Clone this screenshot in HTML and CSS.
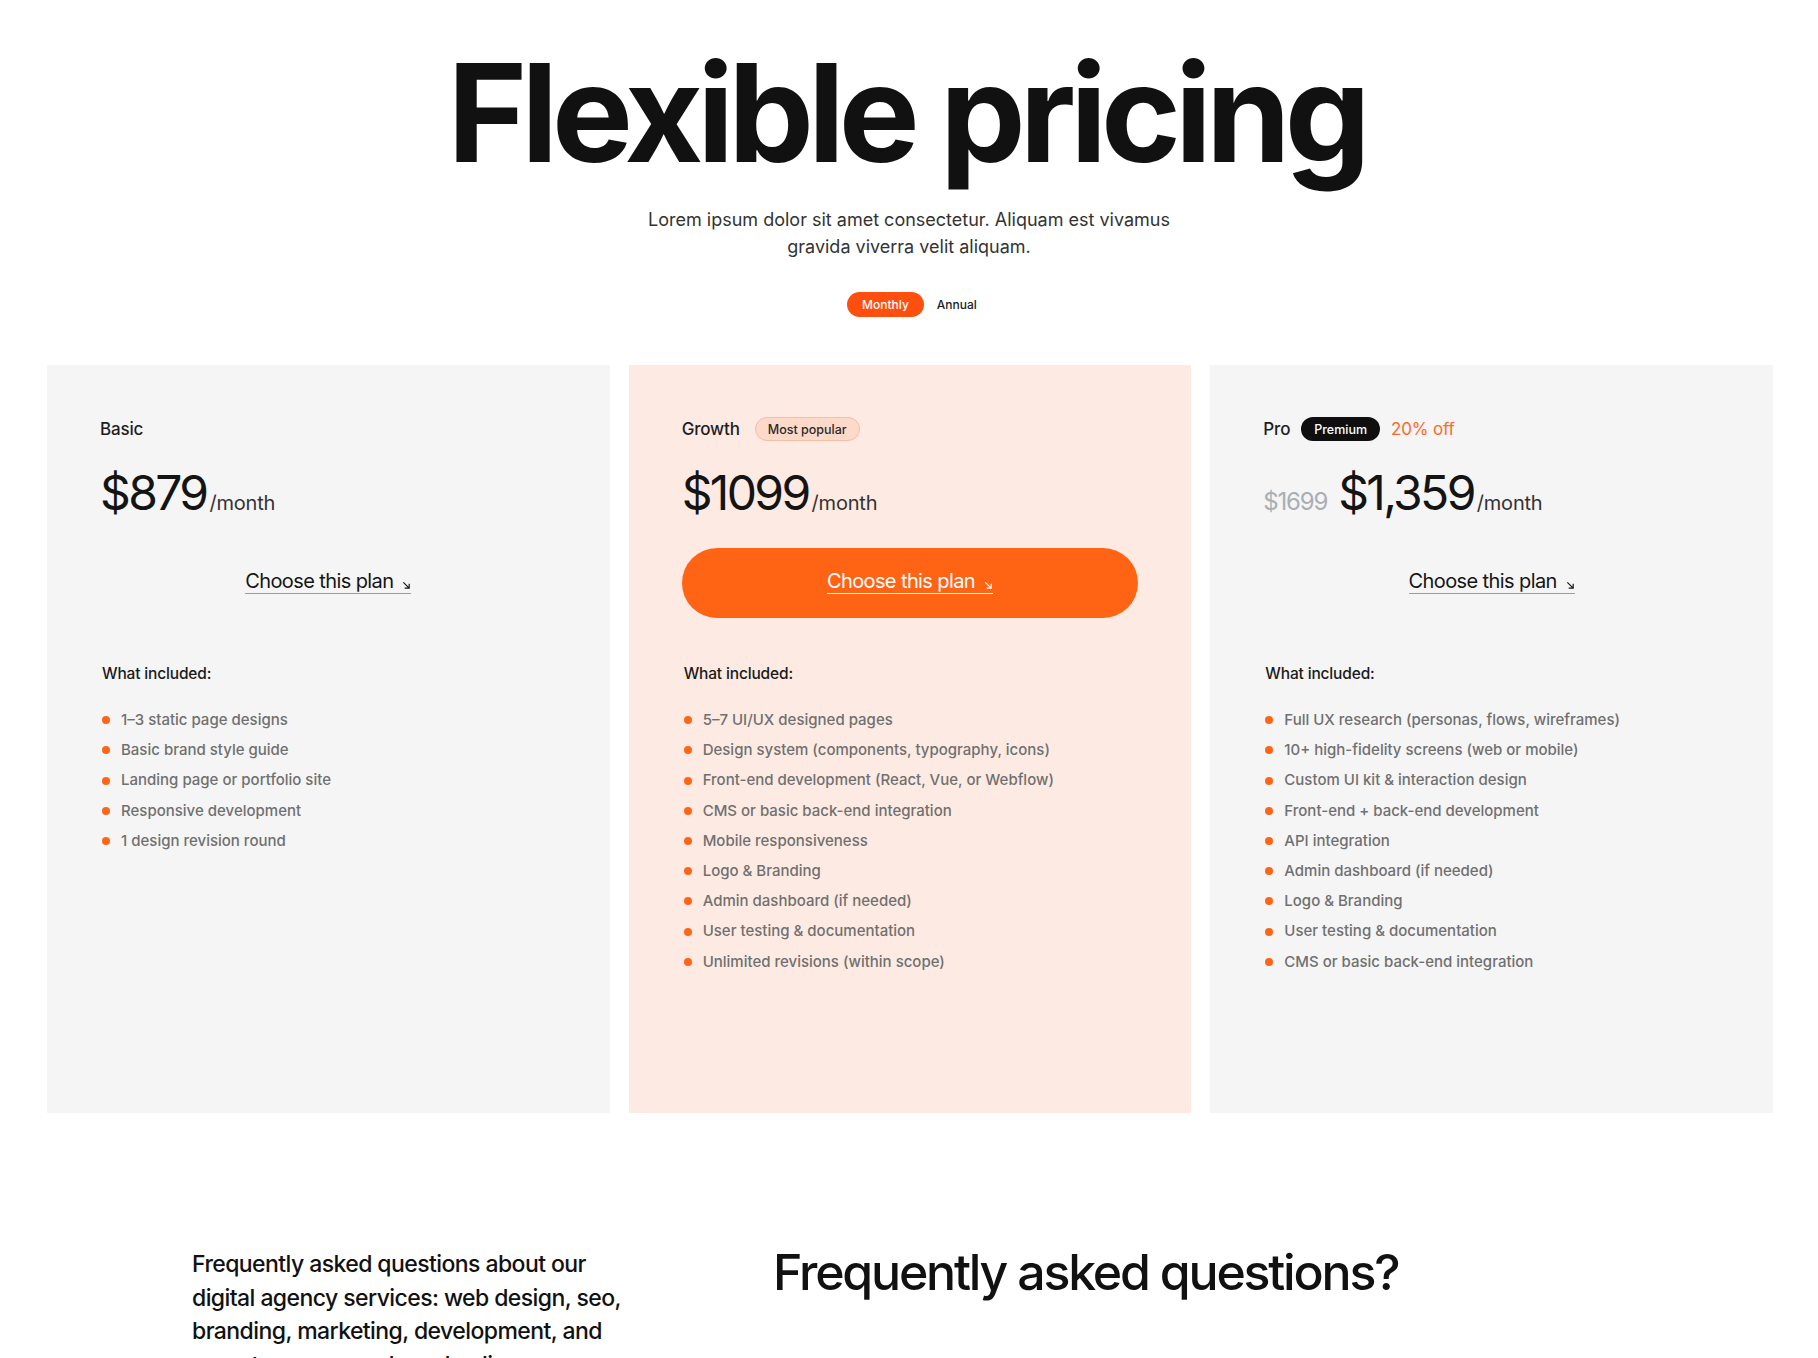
FILE: index.html
```html
<!DOCTYPE html>
<html lang="en">
<head>
<meta charset="utf-8">
<title>Flexible pricing</title>
<link rel="stylesheet" href="styles.css">
</head>
<body>
<main class="page">
  <header class="hero">
    <h1 class="hero-title">Flexible pricing</h1>
    <p class="hero-sub">Lorem ipsum dolor sit amet consectetur. Aliquam est vivamus gravida viverra velit aliquam.</p>
    <div class="toggle">
      <button class="toggle-btn toggle-btn--active">Monthly</button>
      <button class="toggle-btn">Annual</button>
    </div>
  </header>

  <section class="plans">
    <article class="plan">
      <div class="plan-head">
        <span class="plan-name">Basic</span>
      </div>
      <div class="plan-price">
        <span class="price">$879</span><span class="per">/month</span>
      </div>
      <div class="plan-cta">
        <a class="cta-link" href="#">Choose this plan<svg class="cta-arrow" viewBox="0 0 10 10" width="9" height="9"><path d="M1.5 1.5 L8 8 M8 3 V8 H3" fill="none" stroke="currentColor" stroke-width="1.3"/></svg></a>
      </div>
      <h3 class="plan-inc">What included:</h3>
      <ul class="plan-list">
        <li>1–3 static page designs</li>
        <li>Basic brand style guide</li>
        <li>Landing page or portfolio site</li>
        <li>Responsive development</li>
        <li>1 design revision round</li>
      </ul>
    </article>

    <article class="plan plan--featured">
      <div class="plan-head">
        <span class="plan-name">Growth</span>
        <span class="badge badge--popular">Most popular</span>
      </div>
      <div class="plan-price">
        <span class="price">$1099</span><span class="per">/month</span>
      </div>
      <div class="plan-cta plan-cta--filled">
        <a class="cta-link" href="#">Choose this plan<svg class="cta-arrow" viewBox="0 0 10 10" width="9" height="9"><path d="M1.5 1.5 L8 8 M8 3 V8 H3" fill="none" stroke="currentColor" stroke-width="1.3"/></svg></a>
      </div>
      <h3 class="plan-inc">What included:</h3>
      <ul class="plan-list">
        <li>5–7 UI/UX designed pages</li>
        <li>Design system (components, typography, icons)</li>
        <li>Front-end development (React, Vue, or Webflow)</li>
        <li>CMS or basic back-end integration</li>
        <li>Mobile responsiveness</li>
        <li>Logo &amp; Branding</li>
        <li>Admin dashboard (if needed)</li>
        <li>User testing &amp; documentation</li>
        <li>Unlimited revisions (within scope)</li>
      </ul>
    </article>

    <article class="plan">
      <div class="plan-head plan-head--tight">
        <span class="plan-name">Pro</span>
        <span class="badge badge--dark">Premium</span>
        <span class="discount">20% off</span>
      </div>
      <div class="plan-price">
        <span class="old-price">$1699</span><span class="price">$1,359</span><span class="per">/month</span>
      </div>
      <div class="plan-cta">
        <a class="cta-link" href="#">Choose this plan<svg class="cta-arrow" viewBox="0 0 10 10" width="9" height="9"><path d="M1.5 1.5 L8 8 M8 3 V8 H3" fill="none" stroke="currentColor" stroke-width="1.3"/></svg></a>
      </div>
      <h3 class="plan-inc">What included:</h3>
      <ul class="plan-list">
        <li>Full UX research (personas, flows, wireframes)</li>
        <li>10+ high-fidelity screens (web or mobile)</li>
        <li>Custom UI kit &amp; interaction design</li>
        <li>Front-end + back-end development</li>
        <li>API integration</li>
        <li>Admin dashboard (if needed)</li>
        <li>Logo &amp; Branding</li>
        <li>User testing &amp; documentation</li>
        <li>CMS or basic back-end integration</li>
      </ul>
    </article>
  </section>

  <section class="faq">
    <p class="faq-intro">Frequently asked questions about our digital agency services: web design, seo, branding, marketing, development, and more to grow your brand online.</p>
    <h2 class="faq-title">Frequently asked questions?</h2>
  </section>
</main>
</body>
</html>
```

FILE: styles.css
```css
* { box-sizing: border-box; }

html, body {
  margin: 0;
  padding: 0;
  background: #ffffff;
}

body {
  font-family: Inter, "Noto Sans", "Liberation Sans", sans-serif;
  color: #151515;
}

.page {
  padding-top: 45px;
}

.hero {
  display: flex;
  flex-direction: column;
  align-items: center;
  text-align: center;
}

.hero-title {
  margin: 0 0 0 -6px;
  font-size: 136px;
  line-height: 136px;
  font-weight: 700;
  letter-spacing: -0.044em;
  color: #111111;
}

.hero-sub {
  margin: 25px 0 0;
  max-width: 545px;
  font-size: 18px;
  line-height: 27px;
  color: #333333;
}

.toggle {
  margin-top: 32px;
  display: flex;
  align-items: center;
  gap: 13px;
  margin-left: 6px;
}

.toggle-btn {
  font-family: inherit;
  font-size: 12px;
  font-weight: 500;
  height: 25px;
  border: 0;
  border-radius: 999px;
  background: transparent;
  color: #1c1c1c;
  padding: 0;
  cursor: pointer;
}

.toggle-btn--active {
  background: #ff4f0f;
  color: #ffffff;
  padding: 0 15px;
}

.plans {
  margin-top: 48px;
  padding: 0 45px 0 47px;
  display: grid;
  grid-template-columns: repeat(3, 1fr);
  gap: 19px;
}

.plan {
  background: #f5f5f5;
  min-height: 748px;
  padding: 52px 53px;
  display: flex;
  flex-direction: column;
}

.plan--featured {
  background: #fdebe3;
}

.plan-head {
  height: 24px;
  display: flex;
  align-items: center;
  gap: 15px;
}

.plan-head--tight {
  gap: 11px;
}

.plan-name {
  font-size: 17px;
  font-weight: 500;
  color: #1e1e1e;
  letter-spacing: -0.01em;
}

.badge {
  height: 24px;
  display: inline-flex;
  align-items: center;
  padding: 0 13px;
  border-radius: 999px;
  font-size: 12.5px;
  font-weight: 500;
}

.badge--popular {
  background: #fcd9c9;
  border: 1px solid #f8bea3;
  color: #2a2a2a;
  padding: 0 12px;
}

.badge--dark {
  background: #0f0f0f;
  color: #ffffff;
}

.discount {
  font-size: 17px;
  color: #ff6a2a;
  letter-spacing: -0.01em;
}

.plan-price {
  margin-top: 28px;
  height: 48px;
  display: flex;
  align-items: baseline;
}

.price {
  font-size: 48px;
  line-height: 48px;
  font-weight: 400;
  letter-spacing: -0.055em;
  color: #141414;
}

.old-price {
  font-size: 24px;
  line-height: 24px;
  color: #a9afb4;
  letter-spacing: -0.05em;
  margin-right: 11px;
}

.per {
  font-size: 20px;
  line-height: 20px;
  color: #333333;
  margin-left: 3px;
  letter-spacing: -0.01em;
}

.plan-cta {
  margin-top: 31px;
  height: 70px;
  display: flex;
  align-items: center;
  justify-content: center;
  border-radius: 999px;
  color: #151515;
}

.plan-cta--filled {
  background: #ff6414;
  color: #ffffff;
}

.cta-link {
  display: inline-flex;
  align-items: flex-end;
  font-size: 20px;
  line-height: 24px;
  letter-spacing: -0.03em;
  color: inherit;
  text-decoration: none;
  border-bottom: 1.5px solid #ff7a45;
  margin-top: -4px;
}

.plan-cta--filled .cta-link {
  border-bottom-color: #ffffff;
}

.cta-arrow {
  margin-left: 9px;
  margin-bottom: 3px;
}

.plan-inc {
  margin: 46px 0 0 2px;
  font-size: 15.5px;
  line-height: 20px;
  font-weight: 500;
  color: #1a1a1a;
  letter-spacing: -0.01em;
}

.plan-list {
  list-style: none;
  margin: 21px 0 0 2px;
  padding: 0;
}

.plan-list li {
  display: flex;
  align-items: center;
  gap: 11px;
  font-size: 15px;
  font-weight: 500;
  line-height: 30.2px;
  color: #707070;
}

.plan-list li::before {
  content: "";
  width: 8px;
  height: 8px;
  border-radius: 50%;
  background: #ff6516;
  flex: none;
}

.faq {
  margin-top: 135px;
  padding: 0 192px;
  display: grid;
  grid-template-columns: 440px 1fr;
  column-gap: 141px;
  align-items: start;
}

.faq-intro {
  margin: 0;
  font-size: 23px;
  line-height: 33.6px;
  font-weight: 500;
  letter-spacing: -0.025em;
  color: #111111;
}

.faq-title {
  margin: -6px 0 0;
  font-size: 50px;
  line-height: 60px;
  font-weight: 500;
  letter-spacing: -0.044em;
  color: #111111;
}
```
